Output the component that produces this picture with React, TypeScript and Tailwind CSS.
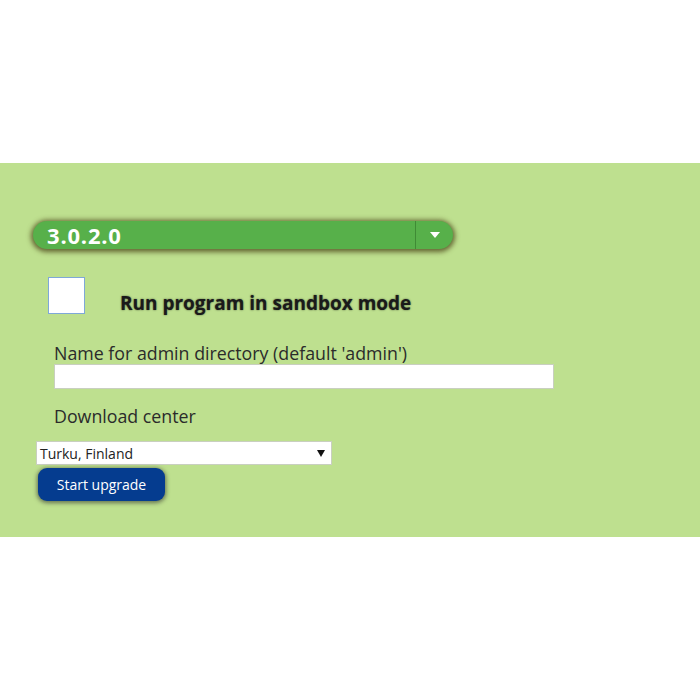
export default function App() {
  return (
    <div className="w-[700px] h-[700px] bg-white flex flex-col" style={{ fontFamily: '"Open Sans", sans-serif' }}>
      <div className="h-[163px]" />
      <div className="h-[374px] bg-[#bee08f] pt-[58px] pl-[33px]">
        {/* version dropdown */}
        <div className="w-[420px] h-[28px] rounded-full bg-[#57b04a] flex items-center shadow-[0_1px_5px_2px_rgba(70,60,20,0.75)]">
          <span className="flex-1 pl-[14px] text-white font-bold text-[22px] leading-none tracking-[0.8px]">3.0.2.0</span>
          <div className="w-px h-full bg-[#3f8b35]" />
          <div className="w-[37px] flex justify-center">
            <svg width="10" height="6" viewBox="0 0 10 6">
              <path d="M0 0 L10 0 L5 6 Z" fill="#ffffff" />
            </svg>
          </div>
        </div>

        {/* sandbox checkbox */}
        <div className="flex items-start mt-[28px] ml-[15px]">
          <div className="w-[37px] h-[37px] bg-white border border-[#7fa8d8]" />
          <span
            className="ml-[35px] mt-[17px] text-[19px] font-bold text-[#1a1a1a] leading-none"
            style={{ textShadow: '0 0 2px rgba(0,0,0,0.6)' }}
          >
            Run program in sandbox mode
          </span>
        </div>

        {/* admin directory */}
        <div className="ml-[21px] mt-[28px] text-[17.8px] text-[#2b2b2b] leading-[22px]">
          Name for admin directory (default 'admin')
        </div>
        <div className="ml-[21px] w-[500px] h-[25px] bg-white border border-[#c9cfc0]" />

        <div className="ml-[21px] mt-[16px] text-[17.8px] text-[#2b2b2b] leading-[22px]">Download center</div>

        {/* download center select */}
        <div className="ml-[3px] mt-[14px] w-[296px] h-[24px] bg-white border border-[#c9cfc0] flex items-center justify-between pl-[3px] pr-[6px]">
          <span className="text-[14px] text-[#222]">Turku, Finland</span>
          <svg width="8" height="8" viewBox="0 0 8 8">
            <path d="M0 1 L8 1 L4 8 Z" fill="#111" />
          </svg>
        </div>

        <button className="ml-[5px] mt-[3px] w-[127px] h-[33px] rounded-[9px] bg-[#053c8f] text-white text-[14px] shadow-[0_1px_4px_1px_rgba(40,40,40,0.6)]">
          Start upgrade
        </button>
      </div>
      <div className="flex-1" />
    </div>
  )
}
